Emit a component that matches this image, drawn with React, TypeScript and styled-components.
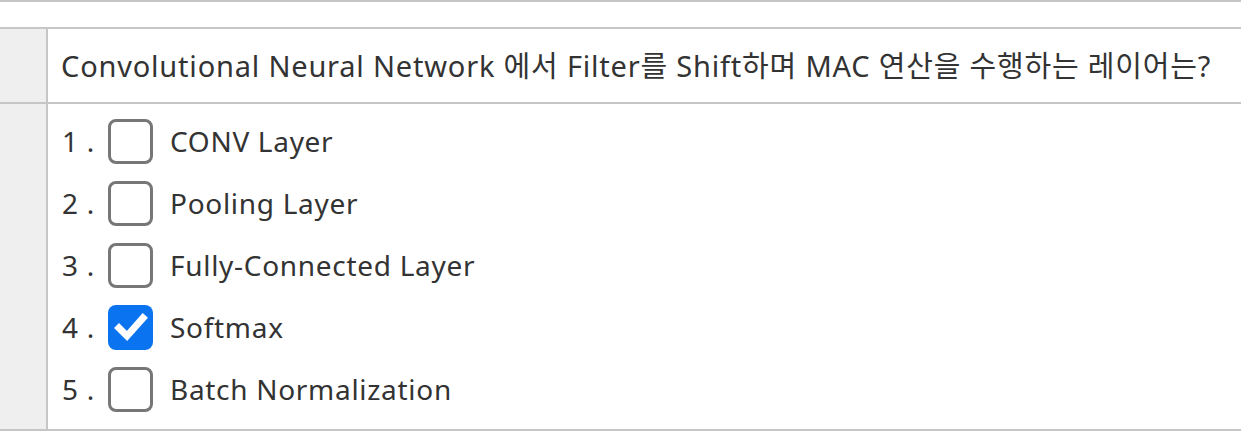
import styled, { createGlobalStyle } from "styled-components";

const GlobalStyle = createGlobalStyle`
  html, body {
    margin: 0;
    padding: 0;
    background: #fff;
  }
  body {
    font-family: "Noto Sans", "Noto Sans CJK KR", sans-serif;
    color: #333;
  }
`;

const LINE = "#c6c6c6";

const Page = styled.div`
  width: 1241px;
  border-top: 2px solid ${LINE};
  padding-top: 25px;
`;

const Table = styled.div`
  display: grid;
  grid-template-columns: 48px 1fr;
  border-top: 2px solid ${LINE};
  border-bottom: 2px solid ${LINE};
`;

const Side = styled.div<{ $last?: boolean }>`
  background: #efefef;
  border-right: 2px solid ${LINE};
  border-bottom: ${({ $last }) => ($last ? "none" : `2px solid ${LINE}`)};
`;

const Question = styled.div`
  height: 75px;
  box-sizing: border-box;
  padding: 0 0 4px 13px;
  display: flex;
  align-items: center;
  font-size: 29px;
  letter-spacing: 0.8px;
  border-bottom: 2px solid ${LINE};
  white-space: nowrap;
`;

const Options = styled.div`
  padding: 6px 0 9px 14px;
  display: flex;
  flex-direction: column;
`;

const Option = styled.label`
  height: 62px;
  display: flex;
  align-items: center;
  font-size: 28px;
  letter-spacing: 0.7px;
`;

const Num = styled.span`
  width: 46px;
`;

const Box = styled.span<{ $checked: boolean }>`
  box-sizing: border-box;
  width: 45px;
  height: 45px;
  border-radius: 8px;
  border: ${({ $checked }) => ($checked ? "none" : "3px solid #777")};
  background: ${({ $checked }) => ($checked ? "#0a74f0" : "#fff")};
  display: flex;
  align-items: center;
  justify-content: center;
  margin-right: 17px;
`;

const OPTIONS = [
  { label: "CONV Layer", checked: false },
  { label: "Pooling Layer", checked: false },
  { label: "Fully-Connected Layer", checked: false },
  { label: "Softmax", checked: true },
  { label: "Batch Normalization", checked: false },
];

const Check = () => (
  <svg width="36" height="36" viewBox="0 0 36 36">
    <path
      d="M6 19 L14 27 L30 9"
      fill="none"
      stroke="#fff"
      strokeWidth="7"
      strokeLinecap="square"
      strokeLinejoin="miter"
    />
  </svg>
);

const App = () => (
  <Page>
    <GlobalStyle />
    <Table>
      <Side />
      <Question>
        Convolutional Neural Network 에서 Filter를 Shift하며 MAC 연산을 수행하는 레이어는?
      </Question>
      <Side $last />
      <Options>
        {OPTIONS.map((opt, i) => (
          <Option key={opt.label}>
            <Num>{i + 1} .</Num>
            <Box $checked={opt.checked}>{opt.checked ? <Check /> : null}</Box>
            {opt.label}
          </Option>
        ))}
      </Options>
    </Table>
  </Page>
);

export default App;
